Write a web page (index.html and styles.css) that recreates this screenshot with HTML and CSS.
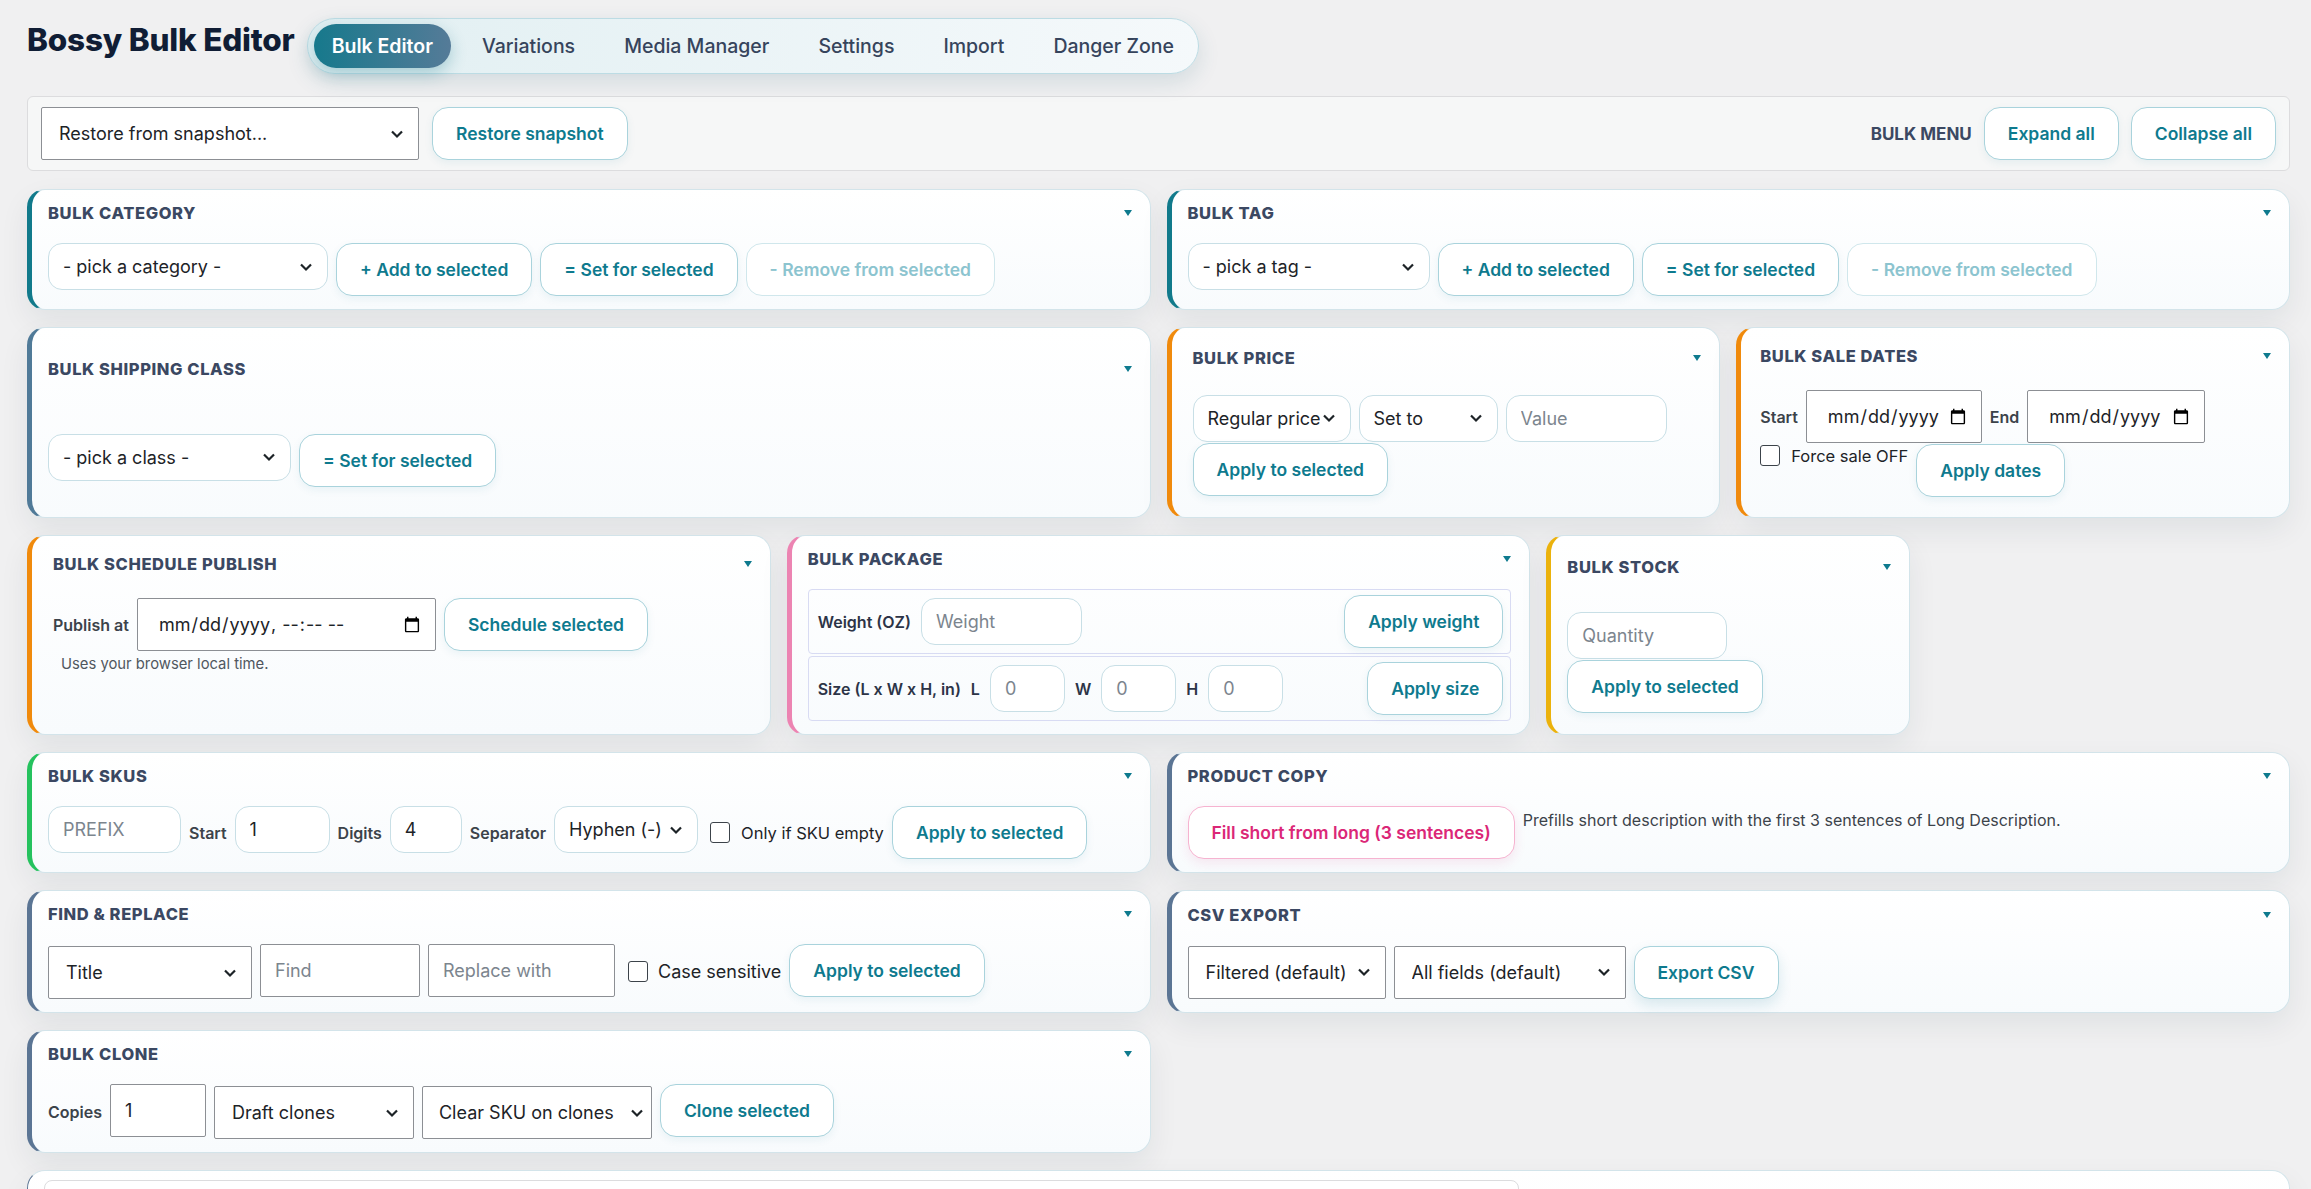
FILE: index.html
```html
<!DOCTYPE html>
<html lang="en">
<head>
    <meta charset="UTF-8">
    <meta name="viewport" content="width=device-width, initial-scale=1.0">
    <title>Bossy Bulk Editor</title>
    <link rel="stylesheet" href="styles.css">
</head>
<body>
<div class="wrap">
    <!-- Header -->
    <header class="top">
        <h1 class="brand">Bossy Bulk Editor</h1>
        <nav class="tabs">
            <a class="tab active">Bulk Editor</a>
            <a class="tab">Variations</a>
            <a class="tab">Media Manager</a>
            <a class="tab">Settings</a>
            <a class="tab">Import</a>
            <a class="tab">Danger Zone</a>
        </nav>
    </header>

    <!-- Snapshot toolbar -->
    <div class="toolbar">
        <select class="native w-378"><option>Restore from snapshot...</option></select>
        <button class="btn">Restore snapshot</button>
        <div class="toolbar-right">
            <span class="menu-label">BULK MENU</span>
            <button class="btn">Expand all</button>
            <button class="btn">Collapse all</button>
        </div>
    </div>

    <div class="grid">
        <!-- Bulk Category -->
        <section class="card span-6 accent-teal">
            <div class="card-head"><h3>Bulk Category</h3><span class="caret"></span></div>
            <div class="card-body">
                <select class="soft w-280"><option>- pick a category -</option></select>
                <button class="btn">+ Add to selected</button>
                <button class="btn">= Set for selected</button>
                <button class="btn" disabled>- Remove from selected</button>
            </div>
        </section>

        <!-- Bulk Tag -->
        <section class="card span-6 accent-teal">
            <div class="card-head"><h3>Bulk Tag</h3><span class="caret"></span></div>
            <div class="card-body">
                <select class="soft w-242"><option>- pick a tag -</option></select>
                <button class="btn">+ Add to selected</button>
                <button class="btn">= Set for selected</button>
                <button class="btn" disabled>- Remove from selected</button>
            </div>
        </section>

        <!-- Bulk Shipping Class -->
        <section class="card span-6 accent-slate">
            <div class="card-head"><h3>Bulk Shipping Class</h3><span class="caret"></span></div>
            <div class="card-body">
                <select class="soft w-243"><option>- pick a class -</option></select>
                <button class="btn">= Set for selected</button>
            </div>
        </section>

        <!-- Bulk Price -->
        <section class="card span-3 accent-orange card--roomy">
            <div class="card-head"><h3>Bulk Price</h3><span class="caret"></span></div>
            <div class="card-body">
                <select class="soft w-158"><option>Regular price</option></select>
                <select class="soft w-139"><option>Set to</option></select>
                <input class="soft w-161" type="text" placeholder="Value">
                <button class="btn">Apply to selected</button>
            </div>
        </section>

        <!-- Bulk Sale Dates -->
        <section class="card span-3 accent-orange card--roomy card--inset">
            <div class="card-head"><h3>Bulk Sale Dates</h3><span class="caret"></span></div>
            <div class="card-body">
                <span class="lbl">Start</span>
                <input class="plain w-176" type="date">
                <span class="lbl">End</span>
                <input class="plain w-178" type="date">
                <label class="check check--top"><span class="box"></span>Force sale OFF</label>
                <button class="btn">Apply dates</button>
            </div>
        </section>

        <!-- Bulk Schedule Publish -->
        <section class="card span-4 accent-orange card--roomy card--top">
            <div class="card-head"><h3>Bulk Schedule Publish</h3><span class="caret"></span></div>
            <div class="card-body">
                <span class="lbl">Publish at</span>
                <input class="plain w-299" type="datetime-local">
                <button class="btn">Schedule selected</button>
                <p class="hint hint--line">Uses your browser local time.</p>
            </div>
        </section>

        <!-- Bulk Package -->
        <section class="card span-4 accent-pink">
            <div class="card-head"><h3>Bulk Package</h3><span class="caret"></span></div>
            <div class="pkg">
                <div class="pkg-row">
                    <div class="pkg-left">
                        <span class="lbl">Weight (OZ)</span>
                        <input class="soft w-161" type="text" placeholder="Weight">
                    </div>
                    <button class="btn">Apply weight</button>
                </div>
                <div class="pkg-row">
                    <div class="pkg-left">
                        <span class="lbl">Size (L x W x H, in)</span>
                        <span class="lbl">L</span>
                        <input class="soft w-75" type="text" placeholder="0">
                        <span class="lbl">W</span>
                        <input class="soft w-75" type="text" placeholder="0">
                        <span class="lbl">H</span>
                        <input class="soft w-75" type="text" placeholder="0">
                    </div>
                    <button class="btn">Apply size</button>
                </div>
            </div>
        </section>

        <!-- Bulk Stock -->
        <section class="card span-2 accent-yellow">
            <div class="card-head"><h3>Bulk Stock</h3><span class="caret"></span></div>
            <div class="card-body">
                <input class="soft w-160" type="text" placeholder="Quantity">
                <button class="btn">Apply to selected</button>
            </div>
        </section>

        <!-- Bulk SKUs -->
        <section class="card span-6 accent-green">
            <div class="card-head"><h3>Bulk SKUs</h3><span class="caret"></span></div>
            <div class="card-body">
                <input class="soft w-133" type="text" placeholder="PREFIX">
                <span class="lbl">Start</span>
                <input class="soft w-95" type="text" value="1">
                <span class="lbl">Digits</span>
                <input class="soft w-72" type="text" value="4">
                <span class="lbl">Separator</span>
                <select class="soft w-144"><option>Hyphen (-)</option></select>
                <label class="check"><span class="box"></span>Only if SKU empty</label>
                <button class="btn">Apply to selected</button>
            </div>
        </section>

        <!-- Product Copy -->
        <section class="card span-6 accent-steel">
            <div class="card-head"><h3>Product Copy</h3><span class="caret"></span></div>
            <div class="card-body">
                <button class="btn btn-pink">Fill short from long (3 sentences)</button>
                <p class="hint hint--side">Prefills short description with the first 3 sentences of Long Description.</p>
            </div>
        </section>

        <!-- Find & Replace -->
        <section class="card span-6 accent-steel">
            <div class="card-head"><h3>Find &amp; Replace</h3><span class="caret"></span></div>
            <div class="card-body">
                <select class="native w-204 low"><option>Title</option></select>
                <input class="plain w-160" type="text" placeholder="Find">
                <input class="plain w-187" type="text" placeholder="Replace with">
                <label class="check check--lg"><span class="box"></span>Case sensitive</label>
                <button class="btn">Apply to selected</button>
            </div>
        </section>

        <!-- CSV Export -->
        <section class="card span-6 accent-steel">
            <div class="card-head"><h3>CSV Export</h3><span class="caret"></span></div>
            <div class="card-body">
                <select class="native w-198"><option>Filtered (default)</option></select>
                <select class="native w-232"><option>All fields (default)</option></select>
                <button class="btn btn-raised">Export CSV</button>
            </div>
        </section>

        <!-- Bulk Clone -->
        <section class="card span-6 accent-steel">
            <div class="card-head"><h3>Bulk Clone</h3><span class="caret"></span></div>
            <div class="card-body">
                <span class="lbl">Copies</span>
                <input class="plain w-96" type="text" value="1">
                <select class="native w-200 low"><option>Draft clones</option></select>
                <select class="native w-230 low tight"><option>Clear SKU on clones</option></select>
                <button class="btn">Clone selected</button>
            </div>
        </section>

        <!-- Products table (below the fold) -->
        <section class="card span-12 card--table">
            <div class="table-bar"></div>
        </section>
    </div>
</div>
</body>
</html>
```

FILE: styles.css
```css
* {
    box-sizing: border-box;
}
body {
    margin: 0;
    background: #f0f0f1;
    font-family: Inter, "Noto Sans", Arial, sans-serif;
    color: #1d2327;
}
.wrap {
    padding: 18px 21px 0 27px;
}

/* header */
.top {
    display: flex;
    align-items: flex-start;
    gap: 12px;
}
.brand {
    margin: 4px 0 0;
    font-size: 31.5px;
    line-height: 36px;
    font-weight: 800;
    color: #101d35;
    letter-spacing: -0.2px;
}
.tabs {
    display: flex;
    gap: 13px;
    padding: 5px 6px;
    border: 1px solid #bcdce4;
    border-radius: 30px;
    background: linear-gradient(90deg, #e1eff2, #f5f9fb);
    box-shadow: 0 8px 22px rgba(30, 90, 110, 0.14);
}
.tab {
    height: 44px;
    display: flex;
    align-items: center;
    padding: 0 18px;
    border-radius: 22px;
    font-size: 19.5px;
    font-weight: 500;
    color: #36445c;
}
.tab.active {
    background: linear-gradient(90deg, #16798c, #557b98);
    color: #fff;
    font-weight: 600;
    box-shadow: 0 6px 16px rgba(22, 121, 140, 0.3);
}

/* toolbar */
.toolbar {
    display: flex;
    align-items: center;
    gap: 13px;
    margin: 22px 0 18px;
    padding: 10px 13px;
    background: #f6f7f7;
    border: 1px solid #dcdcde;
    border-radius: 6px;
}
.toolbar-right {
    margin-left: auto;
    display: flex;
    align-items: center;
    gap: 12px;
}
.menu-label {
    font-size: 17px;
    font-weight: 700;
    color: #3b4862;
}

/* controls */
.btn {
    height: 53px;
    padding: 0 23px;
    background: #fff;
    border: 1px solid #a9d3dc;
    border-radius: 16px;
    color: #0e7a8e;
    font-family: inherit;
    font-size: 17.5px;
    font-weight: 600;
    white-space: nowrap;
    box-shadow: 0 3px 8px rgba(14, 116, 144, 0.07);
    cursor: pointer;
}
.btn:disabled {
    color: #8cc4cf;
    border-color: #d0e7ec;
    box-shadow: none;
}
.btn-pink {
    color: #db2777;
    border-color: #f6b3d0;
    box-shadow: 0 4px 12px rgba(219, 39, 119, 0.1);
}
.btn-raised {
    box-shadow: 0 6px 14px rgba(14, 116, 144, 0.14);
}
select, input {
    font-family: inherit;
    font-size: 18px;
    color: #1d2327;
    margin: 0;
}
input::placeholder {
    color: #7c858e;
}
select {
    appearance: none;
    background: #fff url("data:image/svg+xml,%3Csvg xmlns='http://www.w3.org/2000/svg' viewBox='0 0 16 16'%3E%3Cpath d='M3 5.5l5 5 5-5' fill='none' stroke='%231d2327' stroke-width='2.2'/%3E%3C/svg%3E") no-repeat right 13px center / 16px 16px;
    padding-right: 30px;
}
.soft {
    height: 47px;
    border: 1px solid #c8dfe6;
    border-radius: 14px;
    background-color: #fff;
    padding-left: 14px;
}
input.soft {
    padding-right: 10px;
}
.native {
    height: 53px;
    border: 1px solid #8c8f94;
    border-radius: 2px;
    padding-left: 17px;
}
.native.low {
    margin-top: 2px;
}
.native.tight {
    padding-left: 16px;
    padding-right: 22px;
    background-position: right 6px center;
}
.plain {
    height: 53px;
    border: 1px solid #8c8f94;
    border-radius: 2px;
    background: #fff;
    padding: 0 14px;
}
input[type="date"], input[type="datetime-local"] {
    padding: 0 12px 0 20px;
}
.lbl {
    align-self: center;
    font-size: 16px;
    font-weight: 600;
    color: #3c434a;
    white-space: nowrap;
}
.check {
    align-self: center;
    display: flex;
    align-items: center;
    gap: 11px;
    margin-left: 4px;
    font-size: 16.5px;
    color: #1d2327;
    white-space: nowrap;
}
.check--lg {
    font-size: 18px;
    gap: 10px;
    margin-left: 5px;
}
.check--top {
    align-self: flex-start;
    margin: 1px 0 0;
    font-size: 16.5px;
    gap: 11px;
}
.box {
    width: 20px;
    height: 21px;
    border: 1.5px solid #3c434a;
    border-radius: 3px;
    background: #fff;
}
.hint {
    margin: 0;
    font-size: 14.8px;
    color: #50575e;
}
.hint--line {
    width: 100%;
    padding-left: 8px;
    margin-top: 3px;
}
.hint--side {
    margin-top: 4px;
    font-size: 16px;
    color: #3c434a;
}

/* widths */
.w-72 { width: 72px; }
.w-75 { width: 75px; }
.w-95 { width: 95px; }
.w-96 { width: 96px; }
.w-133 { width: 133px; }
.w-139 { width: 139px; }
.w-144 { width: 144px; }
.w-158 { width: 158px; }
.w-160 { width: 160px; }
.w-161 { width: 161px; }
.w-176 { width: 176px; }
.w-178 { width: 178px; }
.w-187 { width: 187px; }
.w-198 { width: 198px; }
.w-200 { width: 200px; }
.w-204 { width: 204px; }
.w-230 { width: 230px; }
.w-232 { width: 232px; }
.w-242 { width: 242px; }
.w-243 { width: 243px; }
.w-280 { width: 280px; }
.w-299 { width: 299px; }
.w-378 { width: 378px; }

/* cards */
.grid {
    display: grid;
    grid-template-columns: repeat(12, 1fr);
    gap: 17px 16px;
}
.span-2 { grid-column: span 2; }
.span-3 { grid-column: span 3; }
.span-4 { grid-column: span 4; }
.span-6 { grid-column: span 6; }
.span-12 { grid-column: span 12; }
.card {
    display: flex;
    flex-direction: column;
    justify-content: space-around;
    background: linear-gradient(180deg, #ffffff 0%, #f8fbfd 100%);
    border: 1px solid #d3e4ea;
    border-left: 5px solid #5d7795;
    border-radius: 18px;
    padding: 11px 18px 13px 16px;
    box-shadow: 0 12px 30px rgba(20, 40, 60, 0.07);
}
.card--roomy {
    padding: 16px 18px 20px 21px;
}
.card--roomy .card-head {
    margin-bottom: 22px;
}
.card--inset {
    padding-left: 19px;
}
.card--top {
    justify-content: flex-start;
}
.accent-teal { border-left-color: #117a8b; }
.accent-slate { border-left-color: #507a98; }
.accent-steel { border-left-color: #5b7594; }
.accent-orange { border-left-color: #f08a0c; }
.accent-pink { border-left-color: #ec84b2; }
.accent-yellow { border-left-color: #ebb20c; }
.accent-green { border-left-color: #25c25e; }
.card-head {
    display: flex;
    justify-content: space-between;
    align-items: center;
    height: 24px;
    margin-bottom: 18px;
}
.card-head h3 {
    margin: 0;
    font-size: 16.5px;
    font-weight: 800;
    letter-spacing: 0.6px;
    text-transform: uppercase;
    color: #3b4862;
}
.caret {
    width: 0;
    height: 0;
    border-left: 4px solid transparent;
    border-right: 4px solid transparent;
    border-top: 6px solid #0e7a8e;
}
.card-body {
    display: flex;
    flex-wrap: wrap;
    align-items: flex-start;
    gap: 1px 8px;
}

/* package rows */
.pkg {
    display: flex;
    flex-direction: column;
    gap: 2px;
}
.pkg-row {
    display: flex;
    align-items: center;
    justify-content: space-between;
    height: 65px;
    border: 1px solid #d8dbf3;
    border-radius: 4px;
    padding: 0 7px 0 9px;
}
.pkg-left {
    display: flex;
    align-items: center;
    gap: 10px;
}
.pkg-left .lbl {
    font-size: 16px;
    color: #2c3447;
}

/* table card, mostly below the fold */
.card--table {
    justify-content: flex-start;
    height: 140px;
    padding: 9px 18px 9px 16px;
    border-left-width: 1px;
}
.table-bar {
    width: 1475px;
    height: 60px;
    border: 1px solid #dcdcde;
    border-radius: 8px;
    background: #fff;
}
```
